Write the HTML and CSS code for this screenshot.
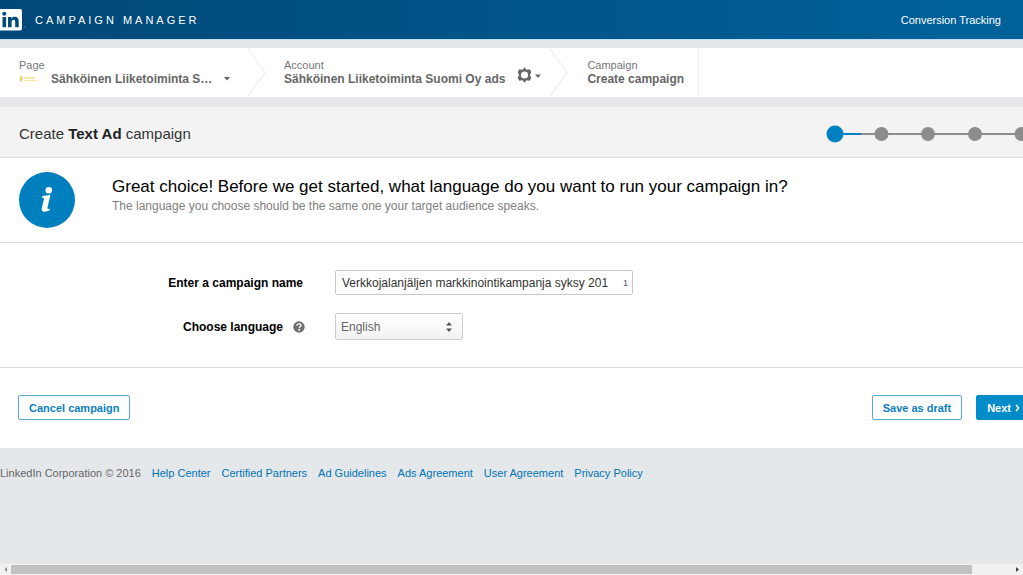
FILE: index.html
```html
<!DOCTYPE html>
<html lang="en">
<head>
<meta charset="utf-8">
<meta name="viewport" content="width=device-width, initial-scale=1">
<title>Campaign Manager</title>
<link rel="stylesheet" href="styles.css">
</head>
<body>
<header class="topbar">
  <svg class="logo" viewBox="0 0 26 22" width="26" height="22" role="img" aria-label="LinkedIn">
    <path d="M0 0h20a2 2 0 0 1 2 2v17.500a2 2 0 0 1-2 2H0z" fill="#fff"/>
    <circle cx="4.300" cy="4.800" r="2" fill="#004b7c"/>
    <path d="M2.500 8h3.600v10.300H2.500zM8 8h3.400v1.400c.6-1 1.600-1.700 3.200-1.700 3.300 0 4.100 2.100 4.100 4.900v5.700h-3.500v-5.100c0-1.400-.2-2.500-1.600-2.500s-2 1.100-2 2.500v5.100H8z" fill="#004b7c"/>
    <circle cx="24.500" cy="18" r=".8" fill="#4783aa"/>
  </svg>
  <span class="brand">CAMPAIGN MANAGER</span>
  <a class="toplink" href="#">Conversion Tracking</a>
</header>

<nav class="crumbs" aria-label="Breadcrumb">
  <div class="crumb crumb-page">
    <span class="crumb-label">Page</span>
    <button class="crumb-value" type="button">
      <svg class="thumb" viewBox="0 0 20 8" width="20" height="8" aria-hidden="true"><path d="M1 1.500h3v1H2.500v1H4v1H2.500v2H1z" fill="#e3c34c"/><path d="M5 2h11v2H5zM5 5h14v1H5z" fill="#f5e7a6"/></svg>
      <span class="page-name">Sähköinen Liiketoiminta S…</span>
      <svg class="caret" viewBox="0 0 6 4" width="6" height="4" aria-hidden="true"><path d="M0 0h6L3 3.500z" fill="#666"/></svg>
    </button>
  </div>
  <svg class="chevron" viewBox="0 0 20 49" width="20" height="49" aria-hidden="true"><path d="M1 1l17 23.500L1 48" fill="none" stroke="#e6e6e6"/></svg>
  <div class="crumb crumb-account">
    <div class="crumb-text">
      <span class="crumb-label">Account</span>
      <span class="crumb-value">Sähköinen Liiketoiminta Suomi Oy ads</span>
    </div>
    <button class="gear" type="button" aria-label="Account settings">
      <svg viewBox="0 0 24 16" width="24" height="16" aria-hidden="true">
        <path d="M7.500 .3l2 2.400 3.200-.5 1.600 2.800-1.300 3 1.300 3-1.600 2.800-3.200-.5-2 2.400-2-2.400-3.200.5L.7 11 2 8 .7 5l1.600-2.800 3.200.5z" fill="#666"/>
        <circle cx="7.500" cy="8" r="3.600" fill="#fff"/>
        <path d="M18 7.500h6l-3 3.500z" fill="#666"/>
      </svg>
    </button>
  </div>
  <svg class="chevron" viewBox="0 0 20 49" width="20" height="49" aria-hidden="true"><path d="M1 1l17 23.500L1 48" fill="none" stroke="#e6e6e6"/></svg>
  <div class="crumb crumb-campaign">
    <span class="crumb-label">Campaign</span>
    <span class="crumb-value">Create campaign</span>
  </div>
</nav>

<main class="panel">
  <div class="titlebar">
    <h1 class="title">Create <b>Text Ad</b> campaign</h1>
    <svg class="steps" viewBox="0 0 204 18" width="204" height="18" role="img" aria-label="Step 1 of 5">
      <path d="M9 9h186" stroke="#8c8c8c" stroke-width="2"/>
      <path d="M9 9h26" stroke="#0080c0" stroke-width="2"/>
      <circle cx="9" cy="9" r="8.500" fill="#0080c0"/>
      <g fill="#8c8c8c"><circle cx="55.500" cy="9" r="7"/><circle cx="102" cy="9" r="7"/><circle cx="149" cy="9" r="7"/><circle cx="195.500" cy="9" r="7"/></g>
    </svg>
  </div>

  <section class="intro">
    <svg class="info" viewBox="0 0 56 56" width="56" height="56" aria-hidden="true">
      <circle cx="28" cy="28" r="28" fill="#007fbf"/>
      <circle cx="29.800" cy="18.300" r="3.300" fill="#fff"/>
      <path d="M23.300 24c2.900-.1 5.400-.5 8.200-1.200l-3 12.800c-.3 1.400.4 1.700 2.600 1.100l-.3 1.400c-1.600.9-3.500 1.600-5.300 1.600-2.500 0-3.200-1.400-2.700-3.700l2.100-8.600c.3-1.300-.2-1.600-1.900-1.600z" fill="#fff"/>
    </svg>
    <div>
      <h2 class="question">Great choice! Before we get started, what language do you want to run your campaign in?</h2>
      <p class="hint">The language you choose should be the same one your target audience speaks.</p>
    </div>
  </section>

  <form class="form" id="campaign">
    <label class="label" for="name">Enter a campaign name</label>
    <div class="field">
      <input class="field-input" id="name" type="text" value="Verkkojalanjäljen markkinointikampanja syksy 201">
      <span class="counter">1</span>
    </div>
    <div class="label label-help">
      <label for="language">Choose language</label>
      <svg viewBox="0 0 12 12" width="12" height="12" aria-hidden="true"><circle cx="6" cy="6" r="5.700" fill="#6f6f6f"/><path d="M4 4.800C4 3.500 4.800 2.800 6 2.800s2 .7 2 1.700c0 1.300-1.800 1.300-1.800 2.700" fill="none" stroke="#fff" stroke-width="1.300"/><circle cx="6.200" cy="9" r=".9" fill="#fff"/></svg>
    </div>
    <div class="picker">
      <select class="select" id="language"><option>English</option></select>
      <svg class="picker-arrows" viewBox="0 0 8 12" width="8" height="12" aria-hidden="true"><path d="M1 4.500L4 1l3 3.500zM1 7.500h6L4 11z" fill="#555"/></svg>
    </div>
  </form>

  <div class="actions">
    <button class="btn" type="button">Cancel campaign</button>
    <button class="btn btn-save" type="button">Save as draft</button>
    <button class="btn btn-next" type="submit" form="campaign">Next
      <svg viewBox="0 0 5 8" width="5" height="8" aria-hidden="true"><path d="M1 1l2.700 3L1 7" fill="none" stroke="#fff" stroke-width="1.500"/></svg>
    </button>
  </div>
</main>

<footer class="footer">
  <span>LinkedIn Corporation © 2016</span>
  <a href="#">Help Center</a>
  <a href="#">Certified Partners</a>
  <a href="#">Ad Guidelines</a>
  <a href="#">Ads Agreement</a>
  <a href="#">User Agreement</a>
  <a href="#">Privacy Policy</a>
</footer>

<div class="scrollbar" aria-hidden="true">
  <svg viewBox="0 0 11 11" width="11" height="11"><path d="M7 3v5L4.500 5.500z" fill="#888"/></svg>
  <div class="track"><div class="thumb-bar"></div></div>
  <svg viewBox="0 0 11 11" width="11" height="11"><path d="M4 3v5l3-2.500z" fill="#444"/></svg>
</div>
</body>
</html>
```
FILE: styles.css
```css
* { box-sizing: border-box; }

body {
  margin: 0;
  min-height: 100vh;
  display: flex;
  flex-direction: column;
  overflow: hidden;
  background: #e4e8eb;
  color: #000;
  font-family: "Liberation Sans", Arial, sans-serif;
  font-size: 11px;
  line-height: 14px;
}

button, input, select { font: inherit; color: inherit; }
button { cursor: pointer; }
a { text-decoration: none; }
svg { flex: none; }

.topbar {
  display: flex;
  align-items: center;
  height: 40px;
  padding-right: 22px;
  border-bottom: 1px solid #bfe0f0;
  background: linear-gradient(90deg, #004877, #00629b);
  color: #fff;
}
.brand { margin-left: 9px; letter-spacing: 3px; }
.toplink { margin-left: auto; color: #fff; }

.crumbs {
  display: flex;
  height: 49px;
  margin: 8px 0 10px;
  background: #fff;
  color: #666;
}
.crumb { padding-top: 10px; }
.crumb-page { width: 247px; padding-left: 19px; }
.crumb-label { display: block; color: #777; }
.crumb-value {
  display: flex;
  align-items: center;
  padding: 0;
  border: 0;
  background: none;
  font-size: 12px;
  font-weight: bold;
}
.page-name { margin: 0 12px 0 12px; }
.crumb-account { display: flex; padding-left: 17px; }
.gear {
  height: 18px;
  margin: 9px 8px 0 12px;
  padding: 0;
  border: 0;
  background: none;
}
.crumb-campaign { padding-left: 18px; padding-right: 14px; border-right: 1px solid #eee; }

.panel { background: #fff; }
.titlebar {
  display: flex;
  align-items: center;
  justify-content: space-between;
  height: 51px;
  padding: 4px 0 0 19px;
  border-bottom: 1px solid #dcdcdc;
  background: #f3f3f3;
  overflow: hidden;
}
.title { margin: 0; font-size: 15px; line-height: 18px; font-weight: normal; color: #333; }
.title b { color: #222; }
.steps { margin-right: -7px; }

.intro {
  display: flex;
  gap: 37px;
  padding: 14px 19px;
  border-bottom: 1px solid #dcdcdc;
}
.question { margin: 5px 0 0; font-size: 17px; line-height: 20px; font-weight: normal; }
.hint { margin: 2px 0 0; font-size: 12px; line-height: 14px; color: #808080; }

.form {
  display: grid;
  grid-template-columns: 303px 1fr;
  gap: 18px 32px;
  align-items: center;
  padding: 27px 0;
  border-bottom: 1px solid #dcdcdc;
}
.label { justify-self: end; font-size: 12px; font-weight: bold; }
.label-help { display: flex; align-items: center; gap: 10px; margin-right: -2px; }
.field {
  display: flex;
  align-items: center;
  width: 298px;
  height: 25px;
  border: 1px solid #c8c8c8;
  border-radius: 2px;
}
.field-input {
  flex: 1;
  min-width: 0;
  padding: 0 6px;
  border: 0;
  background: none;
  outline: 0;
  font-size: 12px;
  color: #333;
}
.counter { padding-right: 4px; font-size: 9px; color: #555; }
.picker { position: relative; width: 128px; }
.select {
  appearance: none;
  display: block;
  width: 100%;
  height: 27px;
  padding: 0 5px;
  border: 1px solid #ccc;
  border-radius: 2px;
  background: linear-gradient(#fff, #f2f2f2);
  font-size: 12px;
  color: #666;
}
.picker-arrows { position: absolute; right: 10px; top: 8px; pointer-events: none; }

.actions { display: flex; padding: 27px 0 28px 18px; overflow: hidden; }
.btn {
  height: 25px;
  padding: 0 10px;
  border: 1px solid #58a9d3;
  border-radius: 2px;
  background: #fff;
  color: #0c7fbe;
  font-weight: bold;
}
.btn-save { margin-left: auto; }
.btn-next {
  display: flex;
  align-items: center;
  gap: 4px;
  margin: 0 -8px 0 14px;
  border-color: #008cc9;
  background: #008cc9;
  color: #fff;
}

.footer { display: flex; flex-wrap: wrap; gap: 11px; padding-top: 18px; color: #666; }
.footer a { color: #0073b1; }

.scrollbar { display: flex; height: 11px; margin-top: auto; background: #f1f1f1; }
.track { flex: 1; padding: 1px 0; }
.thumb-bar { width: 96%; height: 9px; background: #c1c1c1; }
```
